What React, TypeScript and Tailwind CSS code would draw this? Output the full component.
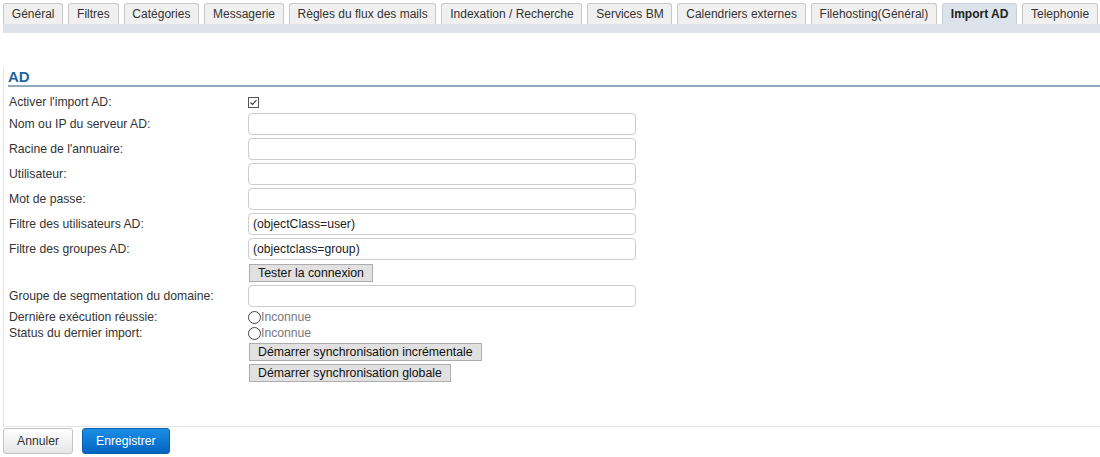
const tabs = [
  "Général",
  "Filtres",
  "Catégories",
  "Messagerie",
  "Règles du flux des mails",
  "Indexation / Recherche",
  "Services BM",
  "Calendriers externes",
  "Filehosting(Général)",
  "Import AD",
  "Telephonie",
];

const Label = ({ children }: { children: React.ReactNode }) => (
  <div className="w-[239px] shrink-0 text-[12.2px] text-[#333]">{children}</div>
);

const TextRow = ({ label, value = "", className = "" }: { label: string; value?: string; className?: string }) => (
  <div className={`flex items-center h-[22px] ${className}`}>
    <Label>{label}</Label>
    <div className="w-[388px] h-[22px] rounded-[4px] border border-[#cdcdcd] bg-white px-[4px] flex items-center text-[12.2px] text-[#222]">
      {value}
    </div>
  </div>
);

const GrayButton = ({ children, className = "" }: { children: React.ReactNode; className?: string }) => (
  <div className={`flex items-center h-[18px] ${className}`}>
    <div className="w-[239px] shrink-0" />
    <button className="h-[18px] ml-px px-[8px] bg-[#e1e1e1] border border-[#adadad] text-[12.3px] text-[#111] leading-none">
      {children}
    </button>
  </div>
);

const StatusRow = ({ label }: { label: string }) => (
  <div className="flex items-center h-[16px]">
    <Label>{label}</Label>
    <span className="w-[13px] h-[13px] rounded-full border-[1.5px] border-[#444] box-border" />
    <span className="text-[12.2px] text-[#777]">Inconnue</span>
  </div>
);

export default function App() {
  return (
    <div className="w-[1100px] h-[457px] bg-white overflow-hidden font-['Arial','Liberation_Sans',sans-serif]">
      <div className="flex gap-[5px] pl-[3px] pt-[3px]">
        {tabs.map((t) => {
          const active = t === "Import AD";
          return (
            <div
              key={t}
              className={`h-[21px] px-[7.8px] border border-b-0 rounded-t-[3px] flex items-center text-[12px] whitespace-nowrap ${
                active ? "bg-[#dce3ea] border-[#c9d0d8] font-bold text-[#222]" : "bg-[#f0f0f0] border-[#c8c8c8] text-[#333]"
              }`}
            >
              {t}
            </div>
          );
        })}
      </div>
      <div className="h-[9px] bg-[#dce3ea] ml-[3px]" />
      <div className="ml-[3px] border-l border-b border-[#dfe5eb] pl-[5px] pb-[44px]">
        <div className="mt-[35px] h-[19px] border-b-2 border-[#8ea9c0] text-[15px] font-bold text-[#23649b] leading-[17px] -ml-px">
          AD
        </div>
        <div className="flex items-center h-[20px] mt-[5px]">
          <Label>Activer l'import AD:</Label>
          <span className="w-[11px] h-[11px] border border-[#555] bg-white flex items-center justify-center">
            <svg width="9" height="9" viewBox="0 0 9 9">
              <path d="M1.5 4.5 L3.5 6.5 L7.5 2" fill="none" stroke="#333" strokeWidth="1.1" />
            </svg>
          </span>
        </div>
        <div className="flex flex-col gap-[3px] mt-px">
          <TextRow label="Nom ou IP du serveur AD:" />
          <TextRow label="Racine de l'annuaire:" />
          <TextRow label="Utilisateur:" />
          <TextRow label="Mot de passe:" />
          <TextRow label="Filtre des utilisateurs AD:" value="(objectClass=user)" />
          <TextRow label="Filtre des groupes AD:" value="(objectclass=group)" />
        </div>
        <GrayButton className="mt-[4px]">Tester la connexion</GrayButton>
        <TextRow label="Groupe de segmentation du domaine:" className="mt-[3px]" />
        <div className="mt-[2px]">
          <StatusRow label="Dernière exécution réussie:" />
          <StatusRow label="Status du dernier import:" />
        </div>
        <GrayButton className="mt-[2px]">Démarrer synchronisation incrémentale</GrayButton>
        <GrayButton className="mt-[3px]">Démarrer synchronisation globale</GrayButton>
      </div>
      <div className="flex gap-[9px] ml-[3px] mt-px">
        <button className="h-[26px] px-[13px] rounded-[3px] border border-[#c4c4c4] bg-gradient-to-b from-white to-[#e6e6e6] text-[12.2px] text-[#333]">
          Annuler
        </button>
        <button className="h-[26px] px-[13px] rounded-[3px] border border-[#0b5fad] bg-gradient-to-b from-[#1b8ee6] to-[#0464c2] text-[12.2px] text-white">
          Enregistrer
        </button>
      </div>
    </div>
  );
}
